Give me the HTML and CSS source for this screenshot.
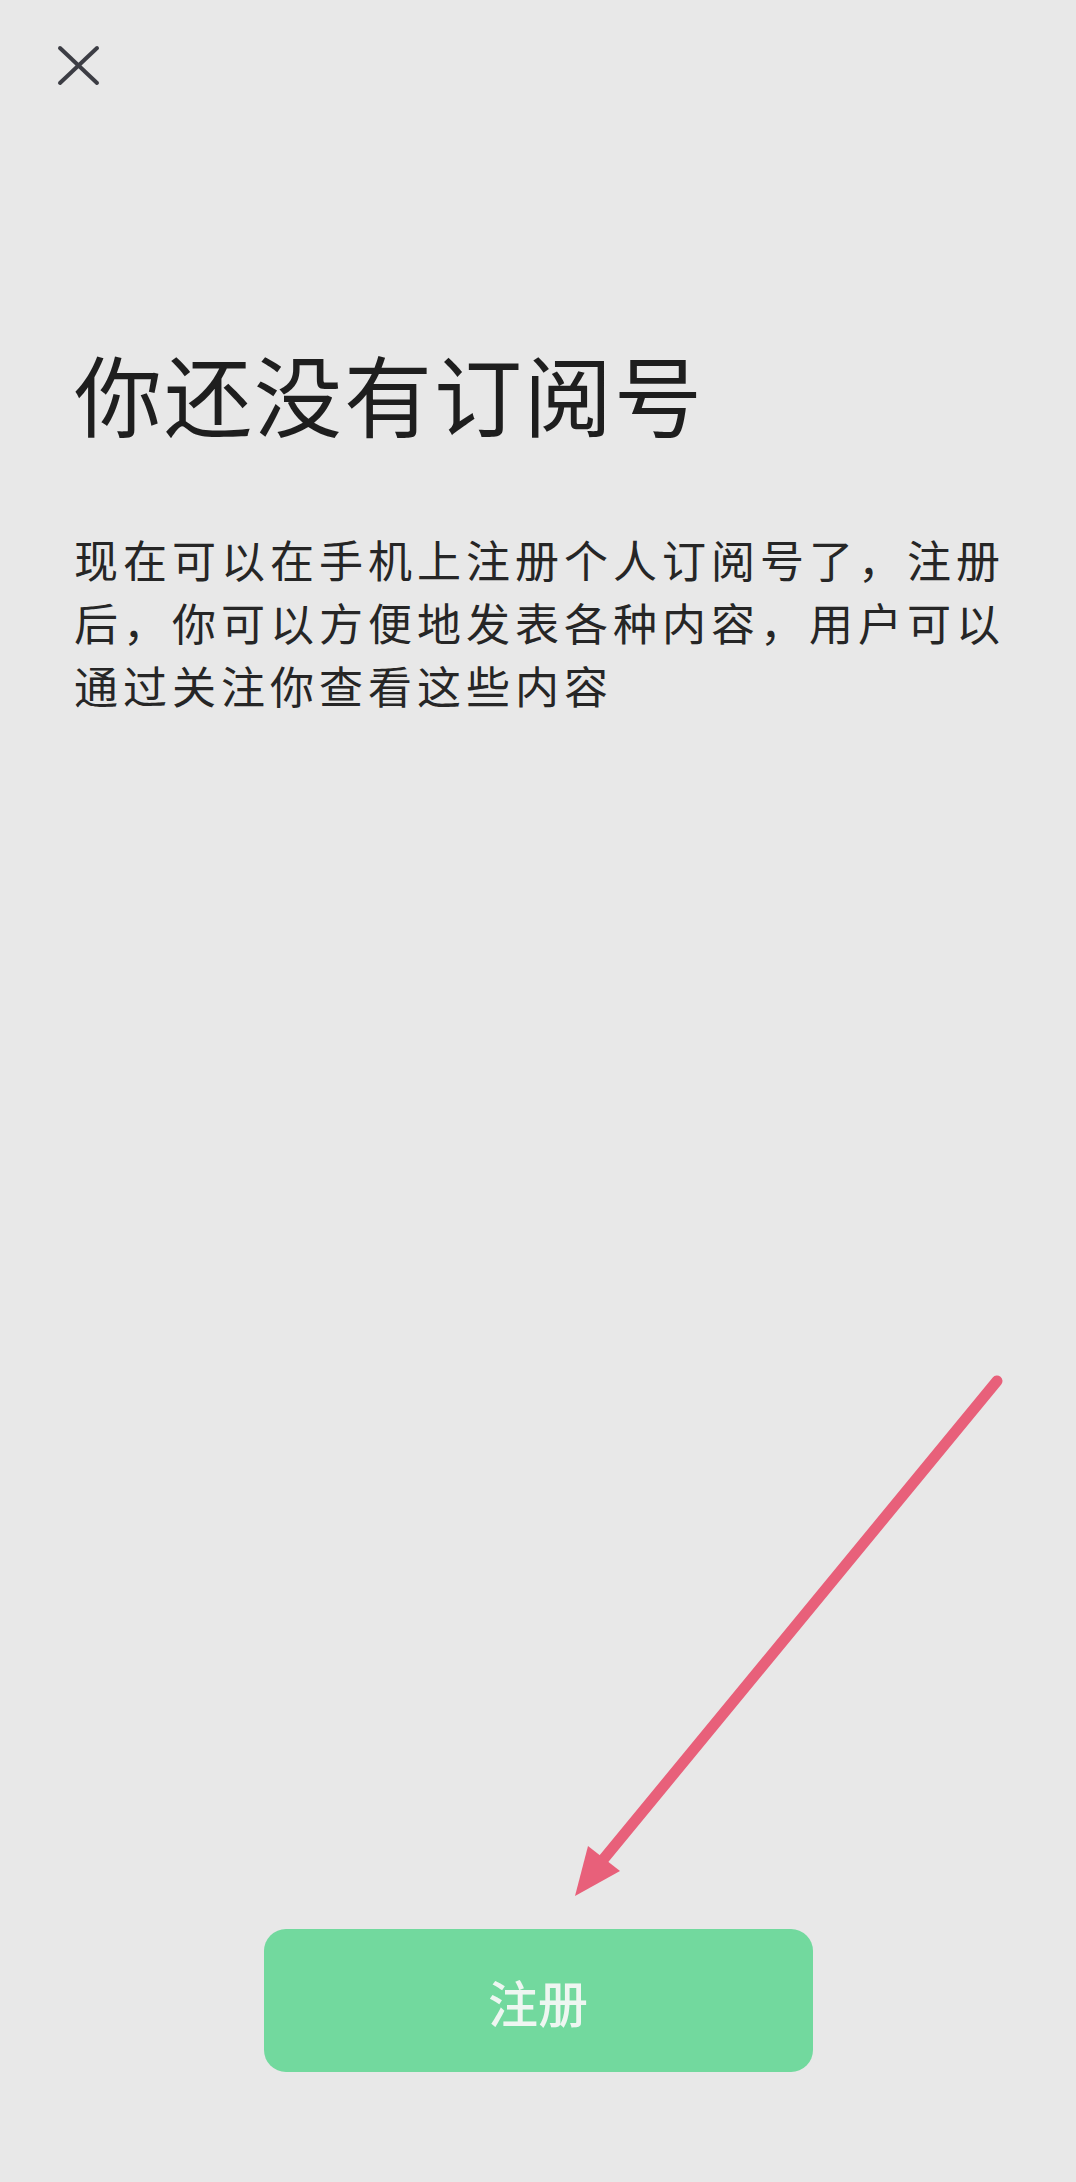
FILE: index.html
```html
<!DOCTYPE html>
<html lang="zh-CN">
<head>
<meta charset="utf-8">
<title>你还没有订阅号</title>
<link rel="stylesheet" href="styles.css">
</head>
<body>
<div class="page">
  <header class="topbar">
    <svg class="close" width="45" height="43" viewBox="0 0 45 43" aria-label="关闭">
      <line x1="4" y1="4" x2="41" y2="39"/>
      <line x1="41" y1="4" x2="4" y2="39"/>
    </svg>
  </header>
  <main class="content">
    <h1 class="title">你还没有订阅号</h1>
    <p class="desc">现在可以在手机上注册个人订阅号了，注册后，你可以方便地发表各种内容，用户可以通过关注你查看这些内容</p>
  </main>
  <div class="actions">
    <button class="register">注册</button>
  </div>
  <svg class="annotation" width="1076" height="2182" viewBox="0 0 1076 2182">
    <line x1="997" y1="1381" x2="602" y2="1861"/>
    <polygon points="575,1896 588,1846 620,1871"/>
  </svg>
</div>
</body>
</html>
```

FILE: styles.css
```css
html, body {
  margin: 0;
  padding: 0;
  background: #e8e8e8;
}

.page {
  position: relative;
  width: 1076px;
  height: 2182px;
  display: flex;
  flex-direction: column;
  font-family: "Noto Sans CJK SC", "Noto Sans", sans-serif;
  overflow: hidden;
}

.topbar {
  padding: 44px 0 0 56px;
  height: 43px;
}

.close {
  display: block;
}

.close line {
  stroke: #3c3d44;
  stroke-width: 4;
  stroke-linecap: round;
}

.content {
  padding: 0 0 0 74px;
}

.title {
  margin: 252px 0 0 0;
  font-size: 88px;
  line-height: 106px;
  letter-spacing: 2px;
  font-weight: 400;
  color: #1e1e1e;
}

.desc {
  margin: 83px 0 0 0;
  width: 945px;
  font-size: 44px;
  line-height: 63px;
  letter-spacing: 5px;
  color: #262626;
}

.actions {
  margin-top: auto;
  padding-bottom: 110px;
  display: flex;
  justify-content: center;
}

.register {
  width: 549px;
  height: 143px;
  border: none;
  border-radius: 22px;
  background: #72d99e;
  color: #eef6f1;
  font-family: "Noto Sans CJK SC", "Noto Sans", sans-serif;
  font-size: 50px;
  font-weight: 500;
  padding: 0;
}

.annotation {
  position: absolute;
  left: 0;
  top: 0;
  pointer-events: none;
}

.annotation line {
  stroke: #e8607a;
  stroke-width: 11;
  stroke-linecap: round;
}

.annotation polygon {
  fill: #e8607a;
}
```
